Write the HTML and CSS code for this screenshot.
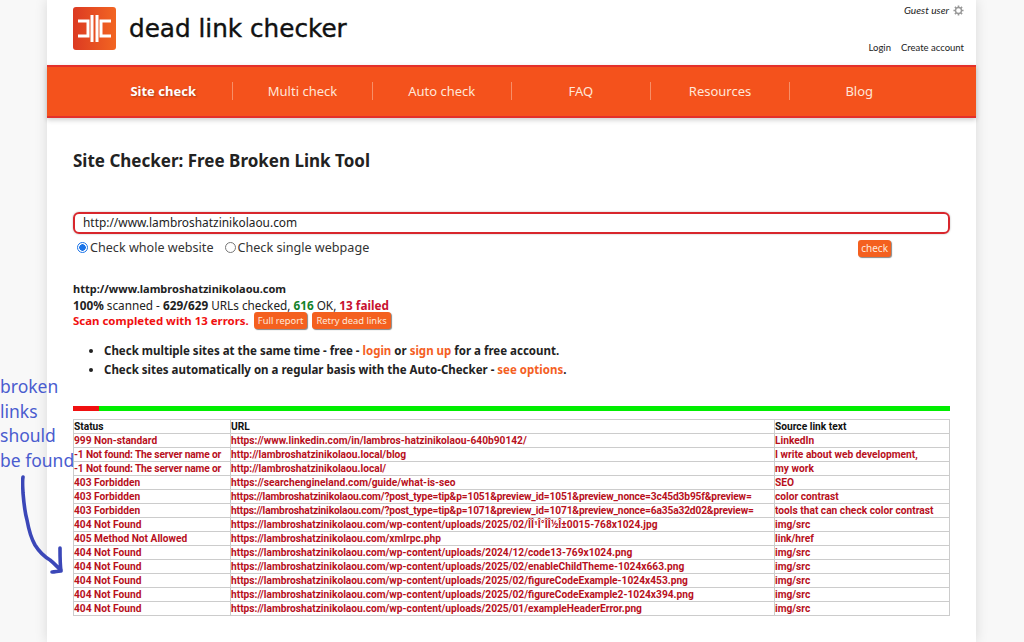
FILE: index.html

```html
<!DOCTYPE html>
<html lang="en">
<head>
  <meta charset="UTF-8" />
  <title>Site Checker: Free Broken Link Tool</title>
  <link rel="stylesheet" href="styles.css">
</head>
<body>
  <div class="page">
    <header class="top">
      <a class="logo">
        <svg class="logo-mark" width="43" height="43" viewBox="0 0 43 43">
          <defs>
            <linearGradient id="logo-grad" x1="0" y1="0" x2="1" y2="0">
              <stop offset="0" stop-color="#dc3a22"/>
              <stop offset="1" stop-color="#f26522"/>
            </linearGradient>
          </defs>
          <rect width="43" height="43" rx="3" fill="url(#logo-grad)"/>
          <path d="M5 14H15V29H5M19 8V35M24 8V35M38 14H28V29H38" fill="none" stroke="#fff" stroke-width="3"/>
        </svg>
        <span class="logo-text">dead link checker</span>
      </a>
      <div class="account">
        <div class="guest">
          <em>Guest user</em>
          <svg width="11" height="11" viewBox="0 0 24 24"><circle cx="12" cy="12" r="6.500" fill="none" stroke="#999" stroke-width="3"/><path d="M12 1V5M12 19V23M1 12H5M19 12H23M4.200 4.200L7 7M17 17L19.800 19.800M4.200 19.800L7 17M17 7L19.800 4.200" stroke="#999" stroke-width="3.500"/></svg>
        </div>
        <div class="account-links"><a>Login</a><a>Create account</a></div>
      </div>
    </header>

    <nav class="menu">
      <a class="current">Site check</a>
      <a>Multi check</a>
      <a>Auto check</a>
      <a>FAQ</a>
      <a>Resources</a>
      <a>Blog</a>
    </nav>

    <main class="content">
      <h1>Site Checker: Free Broken Link Tool</h1>

      <form class="check-form">
        <div class="url-box">http://www.lambroshatzinikolaou.com</div>
        <div class="options">
          <label><span class="radio on"></span>Check whole website</label>
          <label><span class="radio"></span>Check single webpage</label>
          <button type="button" class="btn btn-check">check</button>
        </div>
      </form>

      <div class="summary">
        <div class="site"><b>http://www.lambroshatzinikolaou.com</b></div>
        <div class="scan-line"><b>100%</b> scanned - <b>629/629</b> URLs checked, <b class="ok">616</b> OK, <b class="failed">13 failed</b></div>
        <div class="errors"><b>Scan completed with 13 errors.</b><button type="button" class="btn">Full report</button><button type="button" class="btn">Retry dead links</button></div>
      </div>

      <ul class="promo">
        <li>Check multiple sites at the same time - free - <a>login</a> or <a>sign up</a> for a free account.</li>
        <li>Check sites automatically on a regular basis with the Auto-Checker - <a>see options</a>.</li>
      </ul>

      <div class="progress"><div class="progress-bad"></div></div>

      <table class="results">
        <colgroup><col class="c1"><col class="c2"><col class="c3"></colgroup>
        <thead>
          <tr><th>Status</th><th>URL</th><th>Source link text</th></tr>
        </thead>
        <tbody>
          <tr><td>999 Non-standard</td><td>https://www.linkedin.com/in/lambros-hatzinikolaou-640b90142/</td><td>LinkedIn</td></tr>
          <tr><td class="tight">-1 Not found: The server name or</td><td>http://lambroshatzinikolaou.local/blog</td><td>I write about web development,</td></tr>
          <tr><td class="tight">-1 Not found: The server name or</td><td>http://lambroshatzinikolaou.local/</td><td>my work</td></tr>
          <tr><td>403 Forbidden</td><td>https://searchengineland.com/guide/what-is-seo</td><td>SEO</td></tr>
          <tr><td>403 Forbidden</td><td class="tight">https://lambroshatzinikolaou.com/?post_type=tip&amp;p=1051&amp;preview_id=1051&amp;preview_nonce=3c45d3b95f&amp;preview=</td><td>color contrast</td></tr>
          <tr><td>403 Forbidden</td><td class="tight">https://lambroshatzinikolaou.com/?post_type=tip&amp;p=1071&amp;preview_id=1071&amp;preview_nonce=6a35a32d02&amp;preview=</td><td>tools that can check color contrast</td></tr>
          <tr><td>404 Not Found</td><td>https://lambroshatzinikolaou.com/wp-content/uploads/2025/02/ÎÎ¹Î°ÎÎ½Î±0015-768x1024.jpg</td><td>img/src</td></tr>
          <tr><td>405 Method Not Allowed</td><td>https://lambroshatzinikolaou.com/xmlrpc.php</td><td>link/href</td></tr>
          <tr><td>404 Not Found</td><td>https://lambroshatzinikolaou.com/wp-content/uploads/2024/12/code13-769x1024.png</td><td>img/src</td></tr>
          <tr><td>404 Not Found</td><td>https://lambroshatzinikolaou.com/wp-content/uploads/2025/02/enableChildTheme-1024x663.png</td><td>img/src</td></tr>
          <tr><td>404 Not Found</td><td>https://lambroshatzinikolaou.com/wp-content/uploads/2025/02/figureCodeExample-1024x453.png</td><td>img/src</td></tr>
          <tr><td>404 Not Found</td><td>https://lambroshatzinikolaou.com/wp-content/uploads/2025/02/figureCodeExample2-1024x394.png</td><td>img/src</td></tr>
          <tr><td>404 Not Found</td><td>https://lambroshatzinikolaou.com/wp-content/uploads/2025/01/exampleHeaderError.png</td><td>img/src</td></tr>
        </tbody>
      </table>
    </main>
  </div>

  <div class="note">broken<br>links<br>should<br>be found</div>
  <svg class="note-arrow" width="50" height="105" viewBox="0 0 50 105">
    <path d="M2 2C1 8 2 14 2 18C3 30 4 38 6 45C8 56 10 63 14 70C19 78 24 82 29 85C33 88 37 93 40 95M39 73C39 80 39 90 40 96C37 96 34 97 31 97" fill="none" stroke="#3b47b8" stroke-width="3.600" stroke-linecap="round" stroke-linejoin="round"/>
  </svg>
</body>
</html>
```

FILE: styles.css

```css
html, body {
  height: 100%;
}
body {
  margin: 0;
  background-color: #f8f8f8;
  color: #111;
  font-family: 'Noto Sans', 'Open Sans', sans-serif;
  font-size: 13px;
  overflow: hidden;
}
.page {
  width: 929px;
  height: 642px;
  margin-left: 47px;
  background-color: #fff;
  box-shadow: 0 0 12px rgba(0,0,0,0.13);
}
.top {
  height: 65px;
  display: flex;
  justify-content: space-between;
  padding: 0 12px 0 26px;
}
.logo {
  display: flex;
  align-items: flex-start;
  gap: 13px;
  padding-top: 7px;
}
.logo-mark {
  display: block;
}
.logo-text {
  font-family: 'DejaVu Sans', sans-serif;
  font-size: 24.700px;
  line-height: 43px;
  color: #111;
  -webkit-text-stroke: 0.4px #111;
}
.account {
  display: flex;
  flex-direction: column;
  align-items: flex-end;
  font-family: 'Lato', sans-serif;
  color: #222;
}
.guest {
  display: flex;
  align-items: center;
  gap: 4px;
  height: 20px;
  font-size: 10.200px;
}
.account-links {
  display: flex;
  gap: 10px;
  margin-top: 21px;
  font-size: 9.500px;
  line-height: 14px;
}
.menu {
  box-sizing: content-box;
  height: 47px;
  display: flex;
  align-items: center;
  padding: 0 0 2px 47px;
  background-color: #f4521c;
  border-top: 2px solid #e3302a;
  border-bottom: 2px solid #e3302a;
  box-shadow: 0 2px 5px rgba(0,0,0,0.2);
}
.menu a {
  box-sizing: border-box;
  width: 139.200px;
  text-align: center;
  color: #ffe6d8;
  font-size: 13px;
  line-height: 18px;
  border-left: 1px solid #f78f68;
}
.menu a:first-child {
  border-left: none;
  width: 138.400px;
}
.menu .current {
  color: #fff;
  font-weight: bold;
  text-shadow: 1px 1px 2px rgba(0,0,0,0.3);
}
.content {
  padding: 0 26px;
}
h1 {
  margin: 32px 0 0;
  font-size: 17px;
  line-height: 22px;
  font-weight: bold;
  color: #222;
}
.check-form {
  margin-top: 40px;
}
.url-box {
  height: 18px;
  padding: 0 8px;
  border: 2px solid #d8262c;
  border-radius: 6px;
  font-size: 11.900px;
  line-height: 17px;
  color: #222;
  box-shadow: 0 0 2px rgba(0,0,0,0.3);
}
.options {
  display: flex;
  align-items: center;
  gap: 11px;
  height: 20px;
  padding-left: 4px;
  margin-top: 3px;
  font-size: 12.600px;
  color: #333;
}
.options label {
  display: flex;
  align-items: center;
}
.radio {
  box-sizing: border-box;
  width: 11px;
  height: 11px;
  margin-right: 2px;
  border: 1px solid #777;
  border-radius: 50%;
}
.radio.on {
  border-color: #1a73e8;
  background: radial-gradient(circle, #1a73e8 0 3px, #fff 3.500px);
}
.btn {
  height: 17px;
  padding: 0 4px;
  border: none;
  border-radius: 3px;
  background-color: #f4601f;
  color: #ffe9dc;
  font-family: 'Noto Sans', sans-serif;
  font-size: 9.400px;
  line-height: 17px;
  box-shadow: 1px 1px 1px #888;
}
.btn-check {
  margin-left: auto;
  margin-right: 59px;
  margin-top: 3px;
  padding: 0 3px;
  font-size: 10px;
}
.summary {
  margin-top: 24px;
  font-size: 12px;
  line-height: 16px;
  color: #222;
}
.site {
  font-size: 11px;
}
.scan-line {
  font-size: 11.750px;
}
.ok {
  color: #14822a;
}
.failed {
  color: #c8102e;
}
.errors {
  display: flex;
  align-items: center;
  height: 15px;
  font-size: 11.450px;
  color: #f01010;
}
.errors .btn {
  margin-left: 5px;
}
.promo {
  margin: 13px 0 0;
  padding-left: 31px;
  font-size: 11.500px;
  font-weight: bold;
  line-height: 19px;
  color: #222;
}
.promo a {
  color: #f4601f;
}
.progress {
  height: 5px;
  margin-top: 27px;
  background-color: #00ee00;
}
.progress-bad {
  width: 26px;
  height: 5px;
  background-color: #f01010;
}
.results {
  width: 877px;
  margin-top: 8px;
  table-layout: fixed;
  border-collapse: collapse;
  font-family: 'Roboto', sans-serif;
  font-size: 10.200px;
  font-weight: bold;
  color: #b8101c;
}
.c1 {
  width: 157px;
}
.c3 {
  width: 175px;
}
.results th, .results td {
  height: 13px;
  padding: 0;
  border: 1px solid #ccc;
  line-height: 12px;
  text-align: left;
  white-space: nowrap;
  overflow: hidden;
}
.results th {
  color: #111;
}
.results td.tight {
  letter-spacing: -0.15px;
}
.note {
  position: absolute;
  left: 0;
  top: 374px;
  font-family: 'Noto Sans', sans-serif;
  font-size: 17.500px;
  line-height: 24.500px;
  color: #4a5ccf;
}
.note-arrow {
  position: absolute;
  left: 21px;
  top: 475px;
}
```
